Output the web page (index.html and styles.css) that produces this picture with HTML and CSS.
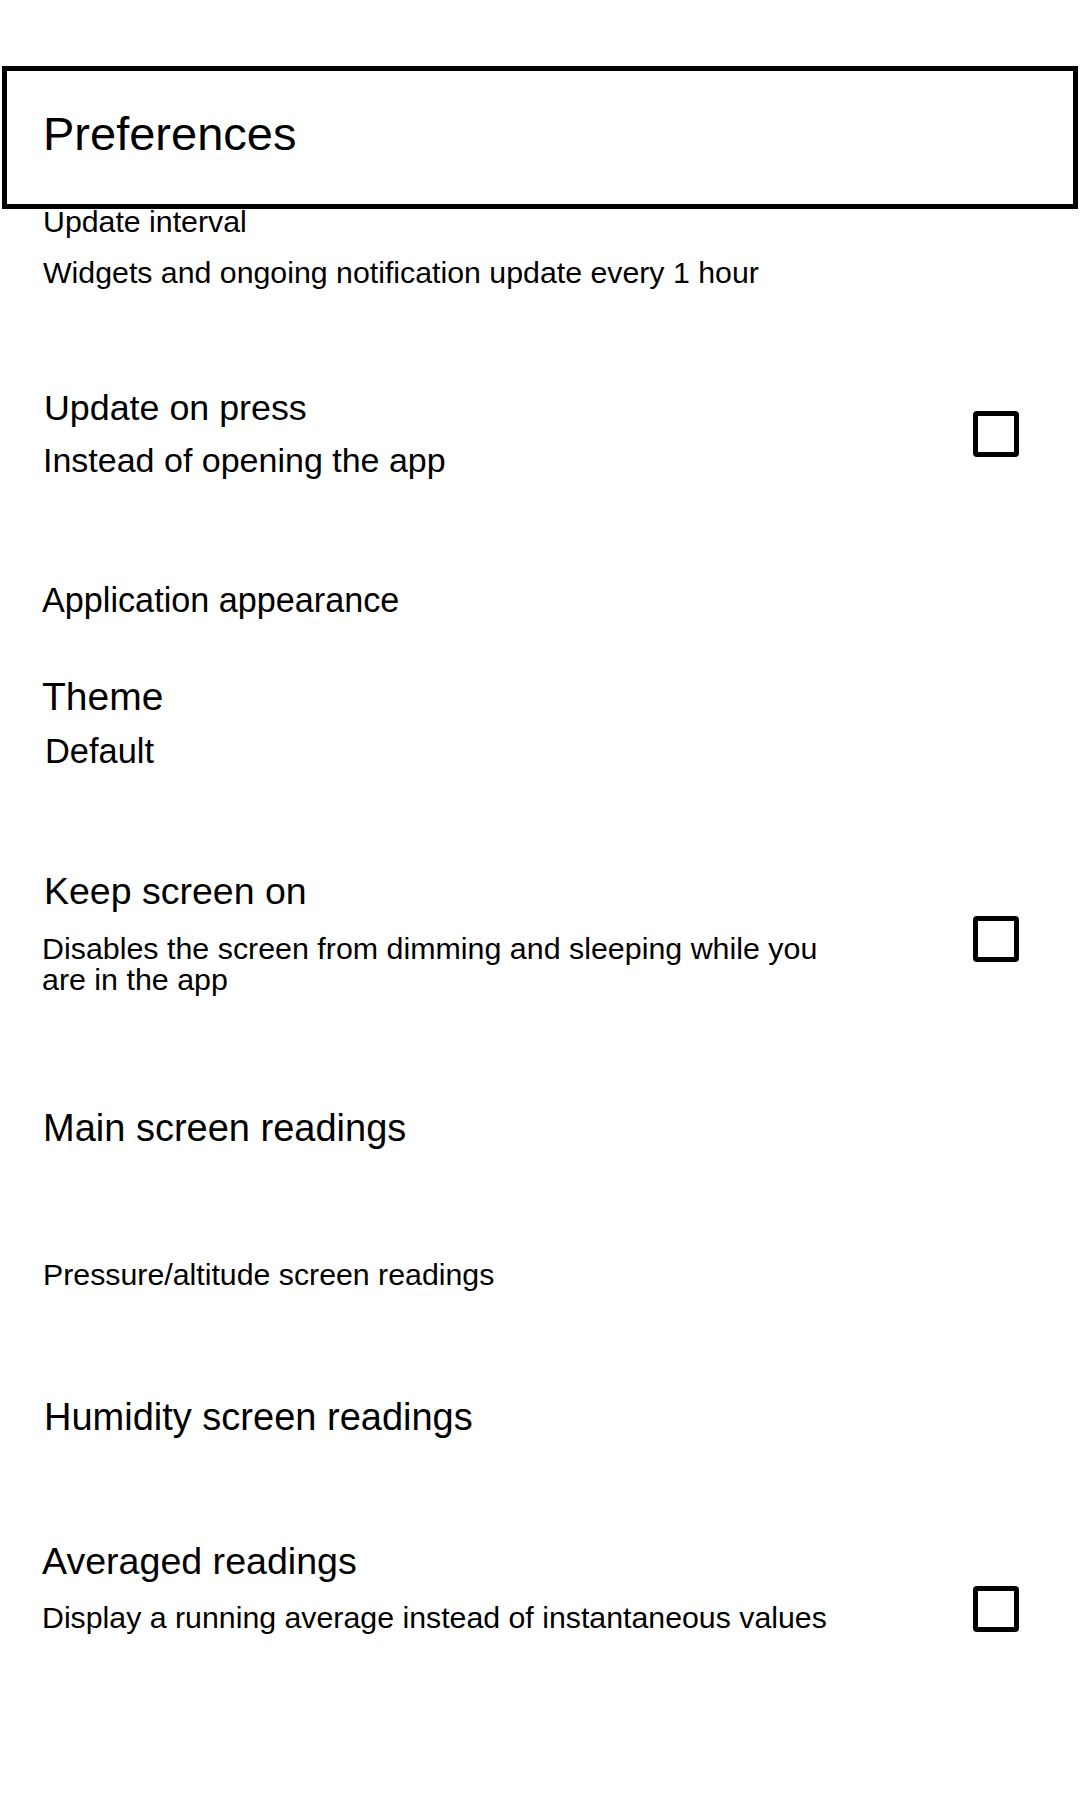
FILE: index.html
```html
<!DOCTYPE html>
<html lang="en">
<head>
<meta charset="utf-8">
<title>Preferences</title>
<link rel="stylesheet" href="styles.css">
</head>
<body>
<header class="toolbar">
  <h1 class="toolbar-title">Preferences</h1>
</header>
<main class="prefs">
  <section class="pref pref-interval">
    <div class="interval-title">Update interval</div>
    <div class="interval-summary">Widgets and ongoing notification update every 1 hour</div>
  </section>

  <section class="pref pref-row row-press">
    <div class="pref-text">
      <div class="press-title">Update on press</div>
      <div class="press-summary">Instead of opening the app</div>
    </div>
    <span class="checkbox cb-press"></span>
  </section>

  <div class="category appearance">Application appearance</div>

  <section class="pref pref-theme">
    <div class="theme-title">Theme</div>
    <div class="theme-summary">Default</div>
  </section>

  <section class="pref pref-row row-keep">
    <div class="pref-text">
      <div class="keep-title">Keep screen on</div>
      <div class="keep-summary">Disables the screen from dimming and sleeping while you are in the app</div>
    </div>
    <span class="checkbox cb-keep"></span>
  </section>

  <div class="pref main-readings">Main screen readings</div>
  <div class="pref pressure-readings">Pressure/altitude screen readings</div>
  <div class="pref humidity-readings">Humidity screen readings</div>

  <section class="pref pref-row row-avg">
    <div class="pref-text">
      <div class="avg-title">Averaged readings</div>
      <div class="avg-summary">Display a running average instead of instantaneous values</div>
    </div>
    <span class="checkbox cb-avg"></span>
  </section>
</main>
</body>
</html>
```

FILE: styles.css
```css
html, body {
  margin: 0;
  padding: 0;
  background: #ffffff;
}

body {
  font-family: "Liberation Sans", Arial, sans-serif;
  color: #000000;
}

.toolbar {
  margin: 66px 2px 0 2px;
  border: 5px solid #000;
  padding: 35px 0 42px 36px;
}

.toolbar-title {
  margin: 0;
  font-size: 47px;
  line-height: 56px;
  font-weight: normal;
}

.prefs {
  padding: 0 61px 0 42px;
}

.pref {
  display: block;
}

/* Update interval */
.interval-title {
  font-size: 30.3px;
  line-height: 26px;
  padding-left: 1px;
}

.interval-summary {
  margin-top: 20px;
  font-size: 30.3px;
  line-height: 36px;
  padding-left: 1px;
}

/* rows with checkbox */
.pref-row {
  display: flex;
  align-items: flex-start;
  justify-content: space-between;
}

.pref-text {
  flex: 1 1 auto;
  min-width: 0;
}

.checkbox {
  flex: 0 0 auto;
  box-sizing: border-box;
  width: 46px;
  height: 46px;
  border: 5px solid #000;
  border-radius: 4px;
  background: #fff;
}

.row-press {
  margin-top: 91px;
}

.press-title {
  font-size: 35.8px;
  line-height: 52px;
  padding-left: 2px;
}

.press-summary {
  font-size: 34px;
  line-height: 52px;
  padding-left: 1px;
}

.cb-press {
  margin-top: 29px;
}

/* Application appearance */
.appearance {
  margin-top: 94px;
  font-size: 34.2px;
  line-height: 40px;
}

/* Theme */
.pref-theme {
  margin-top: 50px;
}

.theme-title {
  font-size: 39px;
  line-height: 54px;
}

.theme-summary {
  font-size: 34.4px;
  line-height: 54px;
  padding-left: 3px;
}

/* Keep screen on */
.row-keep {
  margin-top: 89px;
}

.keep-title {
  font-size: 37.5px;
  line-height: 48px;
  padding-left: 2px;
}

.keep-summary {
  margin-top: 18px;
  max-width: 800px;
  font-size: 30.4px;
  line-height: 31px;
}

.cb-keep {
  margin-top: 49px;
}

/* plain readings entries */
.main-readings {
  margin-top: 110px;
  font-size: 38px;
  line-height: 46px;
  padding-left: 1px;
}

.pressure-readings {
  margin-top: 106px;
  font-size: 30.3px;
  line-height: 36px;
  padding-left: 1px;
}

.humidity-readings {
  margin-top: 101px;
  font-size: 38px;
  line-height: 46px;
  padding-left: 2px;
}

/* Averaged readings */
.row-avg {
  margin-top: 97px;
}

.avg-title {
  font-size: 37.6px;
  line-height: 48px;
}

.avg-summary {
  margin-top: 15px;
  font-size: 30.3px;
  line-height: 36px;
}

.cb-avg {
  margin-top: 49px;
}
```
